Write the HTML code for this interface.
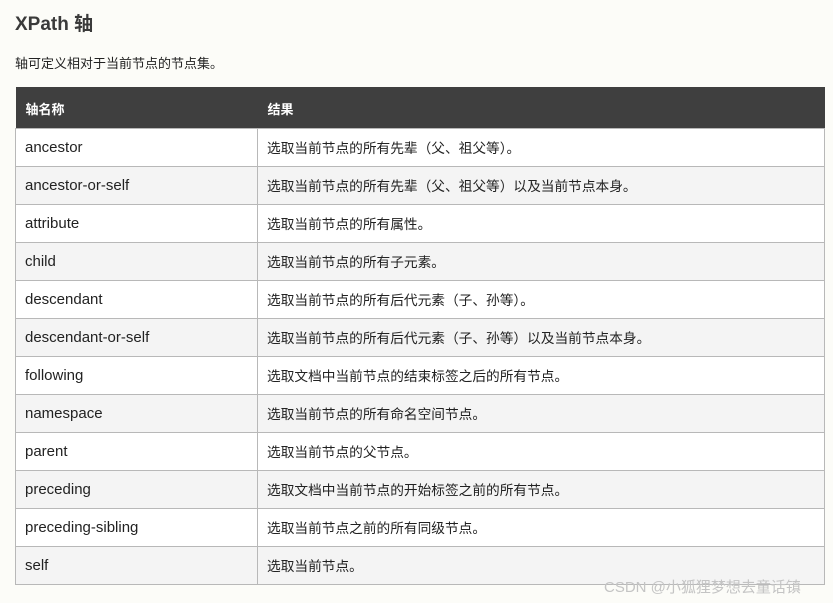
<!DOCTYPE html>
<html><head><meta charset="utf-8"><style>
body{margin:0;background:#fcfcf8;width:833px;height:603px;overflow:hidden;font-family:"Liberation Sans","Noto Sans CJK SC",sans-serif;color:#222;position:relative}
h2{position:absolute;left:15px;top:9px;margin:0;font-size:19px;font-weight:bold;color:#3a3a3a}
p{position:absolute;left:15px;top:53px;margin:0;font-size:13px;color:#222}
table{position:absolute;left:15px;top:87px;width:810px;border-collapse:collapse;font-size:13.7px}
th{background:#3f3f3f;color:#fff;text-align:left;height:41px;padding:2px 0 0 10px;font-size:13px;box-sizing:border-box;vertical-align:middle}
th:first-child{width:242px}
td{height:38px;border:1px solid #b8b8b8;padding:3px 0 0 9px;box-sizing:border-box;vertical-align:middle;line-height:16px}
td:first-child{font-size:15px;padding-top:1px}
tr:nth-child(odd) td{background:#f4f4f4}
tr:nth-child(even) td{background:#fff}
.wm{position:absolute;left:604px;top:576px;font-size:15px;color:#c4c4c4}
</style></head><body>
<h2>XPath 轴</h2>
<p>轴可定义相对于当前节点的节点集。</p>
<table>
<tr><th>轴名称</th><th>结果</th></tr>
<tr><td>ancestor</td><td>选取当前节点的所有先辈（父、祖父等）。</td></tr>
<tr><td>ancestor-or-self</td><td>选取当前节点的所有先辈（父、祖父等）以及当前节点本身。</td></tr>
<tr><td>attribute</td><td>选取当前节点的所有属性。</td></tr>
<tr><td>child</td><td>选取当前节点的所有子元素。</td></tr>
<tr><td>descendant</td><td>选取当前节点的所有后代元素（子、孙等）。</td></tr>
<tr><td>descendant-or-self</td><td>选取当前节点的所有后代元素（子、孙等）以及当前节点本身。</td></tr>
<tr><td>following</td><td>选取文档中当前节点的结束标签之后的所有节点。</td></tr>
<tr><td>namespace</td><td>选取当前节点的所有命名空间节点。</td></tr>
<tr><td>parent</td><td>选取当前节点的父节点。</td></tr>
<tr><td>preceding</td><td>选取文档中当前节点的开始标签之前的所有节点。</td></tr>
<tr><td>preceding-sibling</td><td>选取当前节点之前的所有同级节点。</td></tr>
<tr><td>self</td><td>选取当前节点。</td></tr>
</table>
<div class="wm">CSDN @小狐狸梦想去童话镇</div>
</body></html>
